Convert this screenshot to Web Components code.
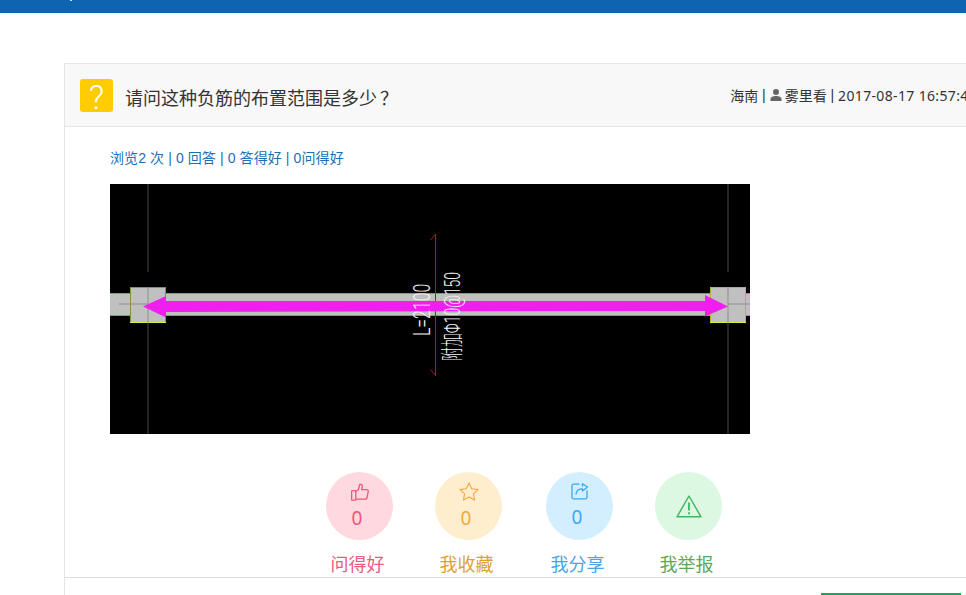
<!DOCTYPE html>
<html lang="zh">
<head>
<meta charset="utf-8">
<title>问答</title>
<style>
  html, body { margin: 0; height: 595px; overflow: hidden; background: #fff; }
  body { font-family: "Noto Sans", "Noto Sans CJK SC", sans-serif; }
</style>
</head>
<body>
<top-bar></top-bar>
<question-card>
  <card-head slot="head" place="海南" author="雾里看" date="2017-08-17 16:57:45">请问这种负筋的布置范围是多少<span style="margin-left:3px">？</span></card-head>
  <stat-line text="浏览2 次 | 0 回答 | 0 答得好 | 0问得好"></stat-line>
  <cad-figure></cad-figure>
  <action-row>
    <action-btn tone="pink" label="问得好" count="0">
      <svg width="18" height="18" viewBox="0 0 18 18" fill="none" stroke="currentColor" stroke-width="1.3" stroke-linejoin="round"><rect x=".6" y="7.600" width="4.200" height="9.600" rx=".8"/><path d="M4.800 8.500l2.700-2 1-4.500c.2-1 2.800-.8 2.800 1.200 0 1.500-.6 2.800-.6 3.400h5c1.200 0 1.700 1 1.500 2l-1.300 6.400c-.2.900-.8 1.200-1.600 1.200H4.800"/></svg>
    </action-btn>
    <action-btn tone="orange" label="我收藏" count="0">
      <svg width="20" height="19" viewBox="0 0 20 19" fill="none" stroke="currentColor" stroke-width="1.100" stroke-linejoin="round"><path d="M10 1l2.700 5.800 6.300.8-4.600 4.300 1.200 6.200L10 15.100 4.400 18.100l1.200-6.200L1 7.600l6.300-.8z"/></svg>
    </action-btn>
    <action-btn tone="blue" label="我分享" count="0">
      <svg width="18" height="17" viewBox="0 0 18 17" fill="none" stroke="currentColor" stroke-width="1.300" stroke-linejoin="round" stroke-linecap="round"><path d="M8 1.200H2.500A1.500 1.500 0 0 0 1 2.700v11.600a1.500 1.500 0 0 0 1.500 1.500h12a1.500 1.500 0 0 0 1.500-1.500V8"/><path d="M5 11c.4-3.300 2.800-5.200 6.500-5.200V8L16.500 4l-5-3.200v2.300"/></svg>
    </action-btn>
    <action-btn tone="green" label="我举报" solo>
      <svg width="26" height="23" viewBox="0 0 26 23" fill="none" stroke="currentColor" stroke-width="1.400" stroke-linejoin="round"><path d="M13 1L1 21.800h24z"/><path d="M13 7.500v8" stroke-width="1.800"/><path d="M13 17.200v2" stroke-width="1.800"/></svg>
    </action-btn>
  </action-row>
  <card-foot slot="foot"></card-foot>
</question-card>

<script>
// верхняя синяя полоса
class TopBar extends HTMLElement {
  constructor() {
    super();
    this.attachShadow({ mode: 'open' }).innerHTML = `
      <style>
        :host { display: block; height: 13px; background: #0f64b2; }
        i { display: block; width: 2px; height: 1px; margin-left: 70px; background: #cfe0f0; }
      </style>
      <i></i>`;
  }
}

// карточка вопроса, шире окна, правый край обрезается
class QuestionCard extends HTMLElement {
  constructor() {
    super();
    this.attachShadow({ mode: 'open' }).innerHTML = `
      <style>
        :host {
          display: block; box-sizing: border-box; width: 921px;
          margin: 50px 0 0 64px; border: 1px solid #e5e5e5; border-bottom: 0;
        }
        .body { padding: 19px 0 0 45px; }
      </style>
      <slot name="head"></slot>
      <div class="body"><slot></slot></div>
      <slot name="foot"></slot>`;
  }
}

class CardHead extends HTMLElement {
  constructor() {
    super();
    this.attachShadow({ mode: 'open' }).innerHTML = `
      <style>
        :host {
          display: flex; align-items: center; height: 62px; box-sizing: content-box;
          padding: 0 7px 0 15px; background: #f8f8f8; border-bottom: 1px solid #e5e5e5; color: #333;
        }
        .mark {
          width: 33px; height: 30px; padding-top: 3px; border-radius: 3px; background: #fc0; color: #fff;
          display: flex; align-items: center; justify-content: center;
          font: 300 34px/30px Roboto, sans-serif;
        }
        .title { margin: 6px 0 0 12px; font-size: 18px; line-height: 24px; flex: 1; white-space: nowrap; }
        .meta { display: flex; align-items: center; font-size: 14px; white-space: pre; }
        .sep { font-family: "Liberation Sans", sans-serif; }
        .date { letter-spacing: .35px; }
        svg { margin: 0 3px 0 0; }
      </style>
      <span class="mark">?</span>
      <span class="title"><slot></slot></span>
      <span class="meta"><span class="place"></span><span class="sep"> | </span><svg width="12" height="12" viewBox="0 0 12 12" fill="#666"><circle cx="6" cy="3" r="3"/><path d="M.5 12V10c0-1.800 2.500-3 5.500-3s5.500 1.200 5.500 3v2z"/></svg><span class="author"></span><span class="sep"> | </span><span class="date"></span></span>`;
  }

  connectedCallback() {
    const root = this.shadowRoot;
    root.querySelector('.place').textContent = this.getAttribute('place');
    root.querySelector('.author').textContent = this.getAttribute('author');
    root.querySelector('.date').textContent = this.getAttribute('date');
  }
}

class StatLine extends HTMLElement {
  constructor() {
    super();
    this.attachShadow({ mode: 'open' }).innerHTML = `
      <style>
        :host { display: block; height: 22px; }
        span {
          font: 14px/20px "Liberation Sans", "Noto Sans CJK SC", sans-serif;
          letter-spacing: .1px; color: #1a6fb8; white-space: pre;
        }
      </style>
      <span></span>`;
  }

  connectedCallback() {
    this.shadowRoot.querySelector('span').textContent = this.getAttribute('text');
  }
}

// чертёж рисую целиком в svg, подписи остаются текстом
class CadFigure extends HTMLElement {
  constructor() {
    super();
    this.attachShadow({ mode: 'open' }).innerHTML = `
      <style>
        :host { display: block; width: 640px; height: 250px; margin-top: 16px; }
        svg { display: block; }
        text { font-family: Roboto, "Noto Sans CJK SC", sans-serif; font-weight: 300; fill: #f4f4f4; font-size: 24px; }
      </style>
      <svg width="640" height="250" viewBox="0 0 640 250">
        <rect width="640" height="250" fill="#000"/>
        <rect y="109" width="640" height="23" fill="#c0c0c0"/>
        <path d="M0 109.500H640M0 131.500H640" stroke="#50c040"/>
        <path d="M38 0V88M38 138V250M618 0V88M618 138V250" stroke="#4a4a4a"/>
        <rect x="20.500" y="103.500" width="35" height="35" fill="#c0c0c0" stroke="#8f8f3a"/>
        <path d="M20 138.500H56" stroke="#e6e640"/>
        <rect x="600.500" y="103.500" width="35" height="35" fill="#c0c0c0" stroke="#b5b53a"/>
        <path d="M600 138.500H636" stroke="#e6e640"/>
        <path d="M9 120H38M618 120H640M38 103V139M618 103V139" stroke="#8e8e8e"/>
        <path d="M325.500 50V192M325.500 50l-5 6M325.500 191.500l-5-6" stroke="#c01020" fill="none"/>
        <path d="M33 122.500L56 112V117L595 117L595 111L618 122.500L595 132.500V127L56 128V133.500Z" fill="#f01ff0"/>
        <text transform="translate(320 152) rotate(-90) scale(.66 1)">L=2100</text>
        <text transform="translate(350 177) rotate(-90) scale(.58 .95)">附加Φ10@150</text>
      </svg>`;
  }
}

class ActionRow extends HTMLElement {
  constructor() {
    super();
    this.attachShadow({ mode: 'open' }).innerHTML = `
      <style>
        :host { display: flex; justify-content: center; column-gap: 43px; margin: 38px 0 0 -45px; }
        ::slotted(:nth-child(even)) { margin-left: -1px; margin-right: 1px; }
      </style>
      <slot></slot>`;
  }
}

const TONES = {
  pink: { bg: '#ffd9df', fg: '#f2557a', text: '#ee5a80' },
  orange: { bg: '#ffeecd', fg: '#eeaa3c', text: '#e0a030' },
  blue: { bg: '#d3efff', fg: '#3aa8f0', text: '#4aa3ec' },
  green: { bg: '#dcf8e3', fg: '#3fb561', text: '#5aa95a' }
};

class ActionBtn extends HTMLElement {
  constructor() {
    super();
    this.attachShadow({ mode: 'open' }).innerHTML = `
      <style>
        :host { display: flex; flex-direction: column; align-items: center; width: 67px; }
        .circle {
          width: 67px; height: 68px; border-radius: 50%; background: var(--bg); color: var(--fg);
          display: flex; flex-direction: column; align-items: center; justify-content: center;
        }
        ::slotted(svg) { display: block; }
        .count { font-size: 19px; line-height: 24px; margin: 5px 5px 0 0; }
        .label { margin: 12px 4px 1px 0; font-size: 18px; line-height: 24px; color: var(--text); white-space: nowrap; }
      </style>
      <div class="circle"><slot></slot><span class="count"></span></div>
      <div class="label"></div>`;
  }

  connectedCallback() {
    const tone = TONES[this.getAttribute('tone')];
    this.style.setProperty('--bg', tone.bg);
    this.style.setProperty('--fg', tone.fg);
    this.style.setProperty('--text', tone.text);
    this.shadowRoot.querySelector('.label').textContent = this.getAttribute('label');
    const count = this.shadowRoot.querySelector('.count');
    if (this.hasAttribute('solo')) {
      count.remove();
    } else {
      count.textContent = this.getAttribute('count');
    }
  }
}

// низ карточки: линия и верх зелёной кнопки, остальное за окном
class CardFoot extends HTMLElement {
  constructor() {
    super();
    this.attachShadow({ mode: 'open' }).innerHTML = `
      <style>
        :host { display: block; border-top: 1px solid #ddd; padding: 15px 0 0 756px; }
        div { width: 140px; height: 2px; background: #17a85f; }
      </style>
      <div></div>`;
  }
}

customElements.define('top-bar', TopBar);
customElements.define('question-card', QuestionCard);
customElements.define('card-head', CardHead);
customElements.define('stat-line', StatLine);
customElements.define('cad-figure', CadFigure);
customElements.define('action-row', ActionRow);
customElements.define('action-btn', ActionBtn);
customElements.define('card-foot', CardFoot);
</script>
</body>
</html>
